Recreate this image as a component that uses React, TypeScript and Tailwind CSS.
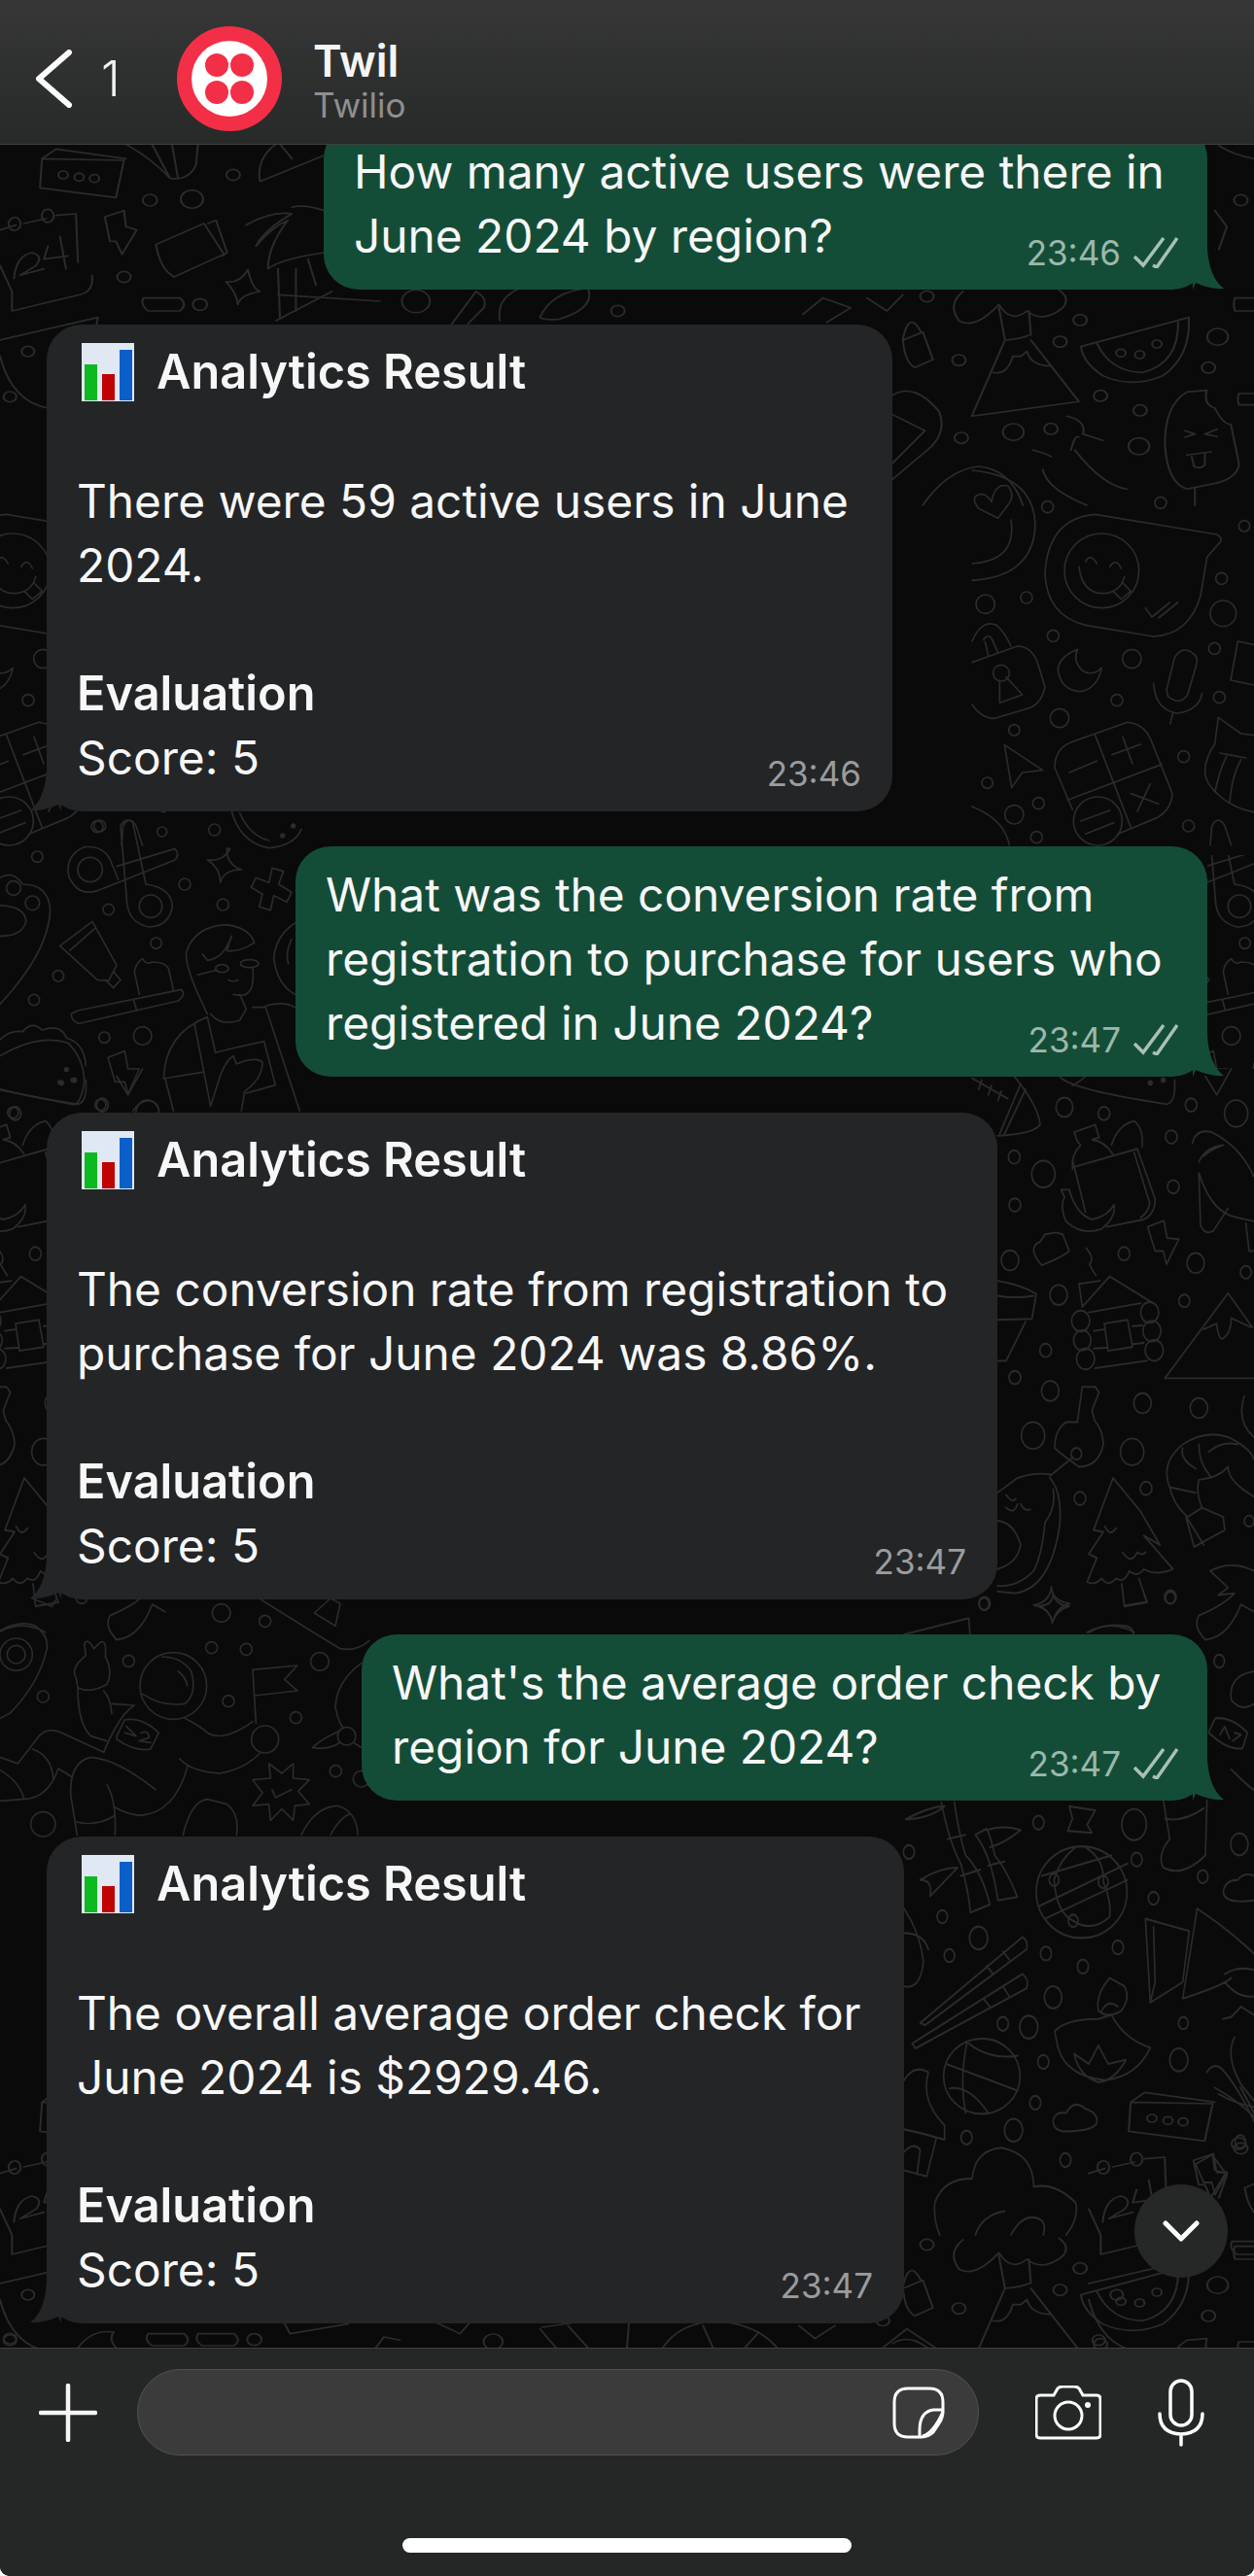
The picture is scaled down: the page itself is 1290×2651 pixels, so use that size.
type Group = {
  id: string;
  tf: string;
  rings: number[][];
  paths: string[];
  dots?: number[][];
};

// wallpaper doodles, traced per visible region of the chat background
const doodles: Group[] = [
  {
    id: "topLeft",
    tf: "scale(.4114 .3333)",
    rings: [[375, 618, 18], [480, 615, 28], [583, 540, 17], [310, 855, 17], [1040, 930, 35], [500, 940, 18], [1545, 960, 17], [158, 540, 12], [198, 547, 12], [236, 551, 12], [70, 1085, 16], [25, 1225, 16]],
    paths: [
      "M105 490L310 495L290 610L100 580ZM140 460L315 490M140 460L105 490",
      "M315 445Q380 490 425 550Q470 560 490 510L495 445M380 445L425 550M430 445L445 550",
      "M0 710L40 695M60 690L115 675M140 665L190 660L195 810M230 850Q235 900 200 910L30 960L30 900L0 820M45 675a15 20 0 1 0 1 1M128 650a15 20 0 1 0 1 1",
      "M35 860Q40 790 80 780Q110 790 90 820L50 850L110 830M120 760L110 800L170 790M150 730L165 830",
      "M262 670L310 650L315 700L342 710L305 785L290 745L275 745Z",
      "M390 755L510 690L560 785L435 855Q400 830 390 755ZM520 690L540 680L568 780L555 790",
      "M730 640Q760 630 810 650M615 695Q680 650 730 660Q660 710 640 760Q680 700 720 680Q670 760 670 830Q700 800 810 780M695 830L700 980M740 830L740 960M770 800L790 880M695 910L950 930M690 990L830 900",
      "M620 832Q630 890 650 900Q600 910 595 940Q590 900 565 870Q600 875 620 832Z",
      "M358 920H450Q470 940 450 960H370Q350 940 358 920Z",
      "M650 560L810 480M650 560Q640 490 690 445M700 445L730 490",
      "M1130 1000L1190 900Q1220 920 1210 950L1170 1000M1250 990Q1240 920 1300 890M1350 980Q1380 900 1470 890Q1490 950 1400 985Q1360 990 1350 980",
      "M0 1050L245 980L240 1010M0 1100Q30 1240 120 1260",
    ],
  },
  {
    id: "topRight",
    tf: "translate(645 100) scale(.4114 .3333)",
    rings: [[750, 615, 17], [1133, 688, 17], [1083, 755, 17], [830, 812, 17], [1477, 740, 26], [1454, 835, 17], [1184, 922, 17], [1283, 967, 17], [966, 1034, 26], [1060, 1024, 17], [836, 1052, 17], [1280, 1078, 26], [1535, 318, 17], [1235, 790, 12], [1282, 795, 12], [1325, 762, 12]],
    paths: [
      "M862 985L1130 940L1010 750M945 750L862 985M945 750Q990 745 1005 735M915 850Q950 860 965 800L985 800L1000 785Q1010 830 1060 830",
      "M930 640Q870 720 830 690Q800 640 840 600M930 640Q960 700 1000 660Q1040 700 1090 650Q1110 620 1080 595M930 650L945 750M1005 660L1010 735",
      "M1135 770L1405 680Q1410 800 1340 860Q1260 900 1190 860Q1140 820 1135 770ZM1175 760Q1210 850 1290 850Q1380 820 1378 695",
      "M1345 1070Q1345 950 1400 910L1450 905Q1440 950 1470 960Q1490 1010 1510 1010L1530 1130Q1530 1170 1480 1190L1400 1210Q1350 1190 1345 1070ZM1420 1205V1260M1395 1030L1420 1040L1395 1050M1475 1025L1445 1040L1475 1048M1400 1105L1460 1095M1412 1110L1418 1140Q1435 1150 1445 1135L1445 1100",
      "M1110 1090Q1120 1040 1130 1050M1100 985Q1150 1000 1140 1040L1190 1060M1120 1090Q1190 1200 1250 1210M1015 1090Q1050 1100 1060 1110M1040 1150Q1050 1210 1150 1260",
      "M690 750L740 725L765 810L720 835Q695 820 690 750ZM690 745Q700 690 715 695Q725 700 735 725",
      "M664 920Q720 880 780 970Q800 1030 760 1080L664 1180M664 980L745 1030L664 1130",
      "M740 1260Q800 1150 880 1140Q960 1150 990 1260",
      "M600 620L650 660L690 610M440 670L490 620L560 650L500 695M480 200L505 100",
      "M1480 150Q1520 180 1568 190M1470 350L1500 400L1480 470M1568 620H1520Q1515 640 1520 660H1568M1568 915H1530Q1525 930 1530 950H1568",
    ],
  },
  {
    id: "rightMiddle",
    tf: "translate(1000 480) scale(.3333)",
    rings: [[233, 125, 18], [582, 112, 18], [840, 184, 17], [770, 346, 18], [41, 425, 29], [168, 405, 18], [775, 454, 40], [250, 523, 18], [493, 594, 29], [748, 562, 18], [447, 722, 18], [763, 713, 18], [270, 777, 29], [130, 814, 17], [653, 896, 18], [47, 977, 17], [205, 1040, 18], [130, 1075, 29], [199, 1145, 18], [668, 1110, 18], [400, 322, 115], [90, 638, 25], [388, 1095, 75]],
    paths: [
      "M225 330Q235 160 380 148L755 210Q780 225 760 240L725 280L705 400Q670 520 560 525L350 490Q230 460 225 330Z",
      "M330 310Q340 395 410 392Q460 385 470 340M350 295Q365 265 385 300M425 310Q445 280 460 315M435 385L460 410L490 385L465 360M535 437L555 465L610 420M575 468L635 420",
      "M0 12Q190 30 195 180Q190 340 0 352M120 165Q140 290 0 300M80 160L20 130Q-10 90 30 85Q50 90 60 110Q70 50 110 60Q135 90 110 120Z",
      "M0 605L140 555Q180 555 200 600L225 680Q215 730 180 745L70 778Q30 780 0 735M0 540Q30 470 75 490Q100 510 120 555M35 535Q50 515 60 530L80 575M40 540L50 585M85 660L85 730L155 705L105 650",
      "M325 565Q265 590 265 630Q275 690 330 695Q385 690 400 622Q370 650 340 630Q310 600 325 565Z",
      "M600 690L625 590Q650 550 685 580Q700 590 690 620L665 705Q640 740 605 710ZM560 670Q565 750 630 762Q700 755 710 700M620 760L612 795",
      "M255 930Q255 870 310 850L480 790Q530 795 550 840L618 1010Q615 1060 570 1085L450 1135M255 930L310 1060M295 1030L585 920M380 830L490 1115M300 945L385 910M432 890L520 858M465 835L495 918M490 1010L575 1042M550 980L510 1065M335 1095L425 1062M350 1135L438 1100",
      "M100 860L218 938L155 945L122 992Z",
      "M750 850L760 775L830 825L870 830M750 855Q700 930 730 980Q780 1050 870 1068M765 885L845 900M785 895Q760 950 750 1005M830 905Q800 960 795 1040",
      "M870 550L820 540L798 660L870 675M735 1170L740 1110Q760 1075 780 1110L800 1170M0 1050Q100 1090 115 1170",
    ],
  },
  {
    id: "rightLower",
    tf: "translate(1000 1100) scale(.3333 .3827)",
    rings: [[285, 103, 26], [407, 120, 18], [676, 97, 18], [815, 120, 36], [130, 237, 18], [220, 283, 36], [615, 183, 18], [621, 317, 18], [132, 366, 18], [117, 515, 27], [469, 497, 18], [690, 522, 27], [845, 547, 17], [267, 608, 27], [655, 624, 17], [227, 757, 18], [132, 830, 18], [241, 866, 27], [526, 899, 27], [700, 912, 27], [188, 986, 36], [494, 1030, 36], [537, 1128, 18], [333, 1155, 18], [855, 1216, 15], [612, 1420, 18], [38, 1438, 18], [322, 1035, 16], [335, 678, 28], [340, 730, 27], [350, 780, 28], [548, 655, 28], [555, 705, 28], [562, 757, 28]],
    paths: [
      "M310 245L350 385M310 270Q305 230 335 205L325 195L315 170L380 150L392 185L370 190Q410 195 435 230M310 265L510 215L565 350Q565 390 530 405L415 425M500 225L548 360Q545 385 520 400M430 205Q450 150 500 140Q530 160 525 210",
      "M275 325L300 325Q320 390 370 405Q420 395 438 365Q445 400 400 430Q340 450 290 410Q270 370 285 345Z",
      "M542 425L592 408L602 455L638 458L600 525L590 490L565 490Z",
      "M680 200Q690 160 740 170Q830 210 870 290M700 280L705 420Q720 450 745 435L790 375M700 280Q740 390 820 400L870 410M700 250Q720 210 775 205Q730 220 715 235M845 415L855 490L870 490",
      "M190 490Q190 470 210 465L225 445L260 440L280 445L300 490Q280 505 215 528Q195 510 190 490Z",
      "M340 640L330 578L395 570M340 640L425 558L555 628M360 655L520 630M375 705L410 700M495 692L525 690M375 752L415 750M495 740L530 737M380 805L540 785M408 685L480 675L495 748L420 758ZM352 482Q380 510 362 525Q370 540 382 555",
      "M595 832L790 603L865 695M595 832H870M715 700L755 685Q760 730 775 725Q800 710 800 670L860 695",
      "M340 855L380 855L392 870L378 900L370 920L378 945Q405 975 405 1010Q390 1070 330 1070Q280 1040 255 1020Q255 970 290 950L325 950ZM310 1045L240 1095",
      "M240 1090Q190 1085 140 1100L78 1140M240 1100Q280 1140 270 1230Q240 1400 130 1410L78 1405M250 1130Q260 1180 225 1220Q215 1310 190 1350Q140 1395 78 1390M78 1215Q130 1220 150 1280Q140 1330 78 1345M105 1145Q125 1170 135 1155M105 1180Q130 1200 140 1170M150 1170Q160 1190 180 1185",
      "M435 1100L375 1240L405 1245L360 1305L385 1315L355 1380Q380 1390 400 1370Q420 1395 445 1370Q470 1385 485 1350Q510 1370 530 1345Q570 1365 620 1345L530 1255L580 1280L520 1190ZM462 1385L470 1445L540 1435L515 1370M410 1230Q425 1260 445 1235M465 1300Q490 1335 510 1300Q525 1310 535 1300",
      "M610 1125Q580 1060 650 1010Q720 970 790 990Q860 1020 870 1050M610 1125L690 1140M650 1020Q640 1050 690 1075M700 1010Q700 1060 735 1095M730 1030Q770 1000 820 1010M610 1125Q620 1170 665 1205L710 1180Q690 1140 700 1105Q760 1100 790 1070Q790 1110 870 1150M660 1205L685 1285L780 1240L775 1205L710 1180M665 1210L715 1280",
      "M735 1350Q800 1320 870 1350M735 1350L790 1395L760 1415L810 1410Q780 1440 700 1470Q680 1500 720 1535Q790 1530 830 1440L870 1460",
      "M245 1392Q245 1430 302 1438Q260 1445 248 1490Q240 1450 190 1442Q240 1435 245 1392Z",
      "M78 570Q150 580 198 605L185 672L78 675M78 610Q130 618 190 610M165 680L105 785L78 785",
      "M0 25L110 80M130 20Q205 100 210 150Q190 175 78 180M165 55L100 175M150 40L85 175M30 30L20 55M60 45L50 70M90 60L80 85",
      "M270 20Q300 55 600 95Q630 90 625 30M310 45Q340 30 350 20M720 20L755 70L800 0M840 880Q815 950 870 990M355 1515Q430 1480 500 1515",
    ],
    dots: [[550, 38, 8], [590, 30, 8]],
  },
  {
    id: "rightBottom",
    tf: "translate(930 1640) scale(.3333 .4209)",
    rings: [[247, 25, 15], [822, 10, 15], [973, 165, 16], [415, 560, 17], [710, 565, 38], [15, 632, 17], [718, 650, 17], [922, 692, 16], [770, 745, 16], [1035, 613, 27], [118, 790, 16], [230, 842, 28], [140, 885, 16], [438, 880, 17], [660, 865, 17], [552, 912, 17], [460, 987, 27], [305, 1052, 17], [385, 1060, 28], [862, 1050, 15], [430, 1145, 17], [848, 1140, 28], [405, 1245, 17], [338, 1312, 28], [193, 1330, 17], [1038, 1340, 16], [498, 1385, 17], [463, 700, 15], [615, 705, 15], [522, 800, 15]],
    paths: [
      "M115 510Q140 610 175 660Q200 730 205 780L265 760Q240 680 190 640Q170 590 155 510M135 600L190 590M175 690L235 675M220 590Q270 640 290 750L350 742Q320 680 280 640Q270 600 255 575L220 590M260 665L310 655",
      "M5 552Q80 520 125 520Q80 550 5 552M50 700Q110 670 165 670Q130 700 80 740Q90 700 50 700M255 578Q310 565 360 578Q310 610 265 620",
      "M408 730a140 112 0 1 0 280 0a140 112 0 1 0 -280 0M415 765L690 660M435 795L690 700M425 690L640 640M463 700Q470 780 522 800Q580 830 635 790M615 705Q640 750 635 790M530 620Q480 650 463 700M560 620Q620 650 615 705",
      "M50 1050L365 840Q385 850 378 870L65 1055ZM25 1100L365 930Q388 945 378 965L35 1112ZM255 910L275 930M305 875L325 895M245 990L265 1010M305 960L325 985",
      "M745 795L880 825L860 950L760 1000L745 795M770 815L775 950L760 1000M905 770L860 990Q980 960 1010 940M905 770Q1000 820 1080 880M990 930Q1030 910 1080 920M990 950Q1030 990 1080 985",
      "M465 1070Q500 1040 600 1040L640 1030Q680 1090 760 1110Q720 1180 620 1190Q500 1180 475 1110ZM635 940Q590 980 600 1020Q630 1040 670 1020Q700 990 680 960L635 940M610 1020Q630 990 660 1010M525 1125L570 1150L600 1105L630 1150L685 1140Q650 1190 600 1195Q540 1180 525 1125Z",
      "M122 1180a118 92 0 1 0 236 0a118 92 0 1 0 -236 0M130 1150L350 1215M195 1095Q170 1190 190 1270M140 1210Q200 1200 260 1270M200 1100Q260 1140 350 1130",
      "M460 1290Q465 1265 500 1270Q525 1235 560 1260Q600 1270 595 1295Q580 1315 490 1315Q460 1310 460 1290Z",
      "M95 1490Q120 1430 210 1430Q220 1360 300 1355Q400 1370 400 1450Q470 1440 530 1490Q540 1530 500 1568M220 1568Q240 1520 310 1510M330 1568Q370 1510 420 1530Q440 1540 430 1568M95 1490Q90 1530 110 1568",
      "M0 1190Q30 1150 75 1170Q50 1240 125 1300L125 1335L100 1330L70 1425L0 1410M0 1310Q60 1320 100 1330M0 1365Q30 1340 50 1360L40 1420",
      "M800 505L820 600Q780 640 800 670Q860 695 930 640L935 505M805 550Q860 560 925 525",
      "M940 340L960 305Q1010 300 1060 340L1045 378Q1000 385 940 340ZM975 345L990 325L1005 355M1020 340L1040 345L1015 360",
      "M1080 190Q1000 200 1010 260Q1040 290 1080 270M1010 430Q1060 470 1080 480",
      "M985 1040L1010 1035L1040 1010L1080 1030M1020 1085Q990 1130 1040 1200L1080 1240M935 1170Q960 1140 990 1170Q1040 1220 1080 1290",
      "M415 30Q460 30 460 0Q470 30 510 30Q470 40 458 70Q450 40 415 30ZM510 520L590 530L565 565L580 585L505 580L520 550Z",
      "M985 730Q990 700 1030 700Q1050 680 1080 690M985 730Q990 760 1080 750M0 770Q50 830 60 900Q50 970 0 960M0 830Q60 830 75 870",
      "M900 1395L955 1370L965 1415L998 1415L960 1470L950 1440L925 1440Z",
      "M0 100L200 60L205 120M680 30L750 20L740 0M570 95Q620 70 690 80Q720 90 700 115",
    ],
  },
  {
    id: "leftMiddle",
    tf: "translate(0 830) scale(.3333)",
    rings: [[115, 155, 17], [300, 62, 18], [500, 78, 15], [662, 72, 18], [570, 240, 18], [688, 303, 18], [335, 318, 17], [482, 422, 17], [180, 523, 17], [105, 597, 17], [322, 713, 17], [440, 708, 28], [310, 921, 17], [40, 945, 17], [278, 195, 38], [465, 308, 35], [42, 252, 22], [100, 298, 22]],
    paths: [
      "M360 185L540 130Q556 150 540 165L300 260Q240 280 212 215Q200 150 260 125Q320 120 340 165L365 225M372 60Q390 30 410 50L450 240Q530 250 532 310Q520 370 460 372Q400 360 392 300L388 250Z",
      "M0 220Q40 195 70 240Q150 240 155 320Q150 450 0 610M0 305Q80 310 80 355Q70 400 0 400",
      "M185 430L285 355L360 490L335 538L300 535ZM215 445L295 375M325 535L350 560L372 535L350 510",
      "M220 640Q220 665 245 670L550 600Q575 580 560 565L240 630ZM412 595L422 630M430 580L415 510Q420 480 440 470Q450 490 470 480Q510 480 520 500L535 565",
      "M640 640Q570 500 575 450Q600 370 700 365Q770 375 785 420Q740 450 700 445L715 400Q690 470 640 475L625 455M610 520L670 505M665 500a20 12 0 1 0 40 0a20 12 0 1 0 -40 0M742 485a28 12 0 1 0 56 0a28 12 0 1 0 -56 0M780 500Q790 600 720 580M650 640Q680 680 740 660L760 625M740 580L760 625M705 535Q720 545 735 535",
      "M640 650Q510 700 505 840L625 820M510 840L535 940M600 670L650 925L680 830Q700 780 720 770L730 795Q790 770 810 790Q810 840 755 880L745 940M725 745L815 725L850 860L760 885M640 650L665 760L725 745M780 620L820 620L925 940M820 615Q880 600 910 620",
      "M0 770Q120 700 210 730Q260 780 260 850Q250 920 225 920L0 875M0 720Q30 690 70 695Q100 660 130 690Q190 670 205 715Q260 730 265 800",
      "M333 775L385 755L395 810L430 810L395 888L385 850L355 850Z",
      "M700 130Q700 180 745 195Q690 195 680 235Q680 190 640 165Q690 170 710 130Z",
      "M840 190L875 200L860 240L900 265L885 295L845 275L835 320L800 310L810 270L775 250L790 220L830 235Z",
      "M910 360Q850 400 845 470Q855 550 910 580M900 410Q880 450 890 485",
      "M715 15Q740 110 830 128Q910 120 930 70M740 20Q770 90 830 105",
      "M410 940Q440 900 470 910Q490 920 490 940",
    ],
    dots: [[205, 812, 8], [225, 845, 8], [185, 852, 8], [872, 90, 8], [905, 60, 8]],
  },
  {
    id: "leftLower",
    tf: "translate(0 1640) scale(.3333)",
    rings: [[535, 285, 103], [818, 450, 42], [50, 188, 50], [50, 188, 28], [1070, 440, 28], [683, 60, 28], [818, 85, 18], [653, 167, 18], [760, 172, 18], [987, 210, 28], [133, 318, 18], [397, 208, 18], [705, 332, 18], [913, 383, 18], [1036, 548, 18], [133, 712, 38], [1115, 572, 25]],
    paths: [
      "M440 310Q500 350 570 340Q610 310 590 240Q560 195 500 195M550 240Q575 260 578 285",
      "M240 290Q240 400 280 440L330 455M345 370Q340 320 320 300M235 260Q222 240 240 215Q260 195 265 190L260 155Q270 135 290 170L310 150Q330 140 325 195Q350 240 330 280Q280 310 240 290Z",
      "M345 340L415 345Q370 370 320 490L190 430Q150 410 120 440L55 525L0 505M360 440L385 390Q440 380 490 430L465 480Q420 490 360 450ZM390 410L420 440L385 430M435 430Q460 420 460 445L430 455L465 460",
      "M570 385Q620 410 640 430Q690 460 780 395M790 400L780 235L918 222L878 265L918 300L785 315M555 510Q590 550 680 555Q760 540 805 490",
      "M480 605Q360 510 280 505Q215 520 218 620L238 745M580 530Q540 680 430 685Q390 680 355 660M330 590Q360 640 355 745M235 705Q300 720 355 685",
      "M0 545Q60 580 75 635Q150 630 180 540L220 565M100 480Q160 500 165 575M0 640L70 635",
      "M0 115Q60 80 110 100Q150 130 145 170Q120 280 30 370L0 385",
      "M1045 425Q990 450 965 475Q1010 485 1050 460M1090 460L1115 475M1115 215Q1040 270 1035 350Q1045 400 1060 415",
      "M830 525L870 555L905 525L905 570L955 575L920 610L955 650L910 655L905 700L870 665L835 700L830 650L780 655L810 615L780 575L835 570ZM840 605L850 630L900 605",
      "M800 15Q950 110 1050 170Q1100 180 1140 145M970 60L1035 100L1050 30L1020 15Z",
      "M565 745Q590 640 640 635L700 650Q740 680 730 745M930 745Q970 660 1040 655Q1100 670 1105 745M1020 745Q1050 690 1080 680",
      "M100 15L160 40L175 15",
    ],
  },
  {
    id: "bottomBand",
    tf: "translate(0 2220) scale(.4114 .3333)",
    rings: [[25, 560, 16], [636, 563, 18], [1233, 570, 24]],
    paths: [
      "M370 545H460Q480 565 460 582H380Q360 565 370 545ZM495 545H585Q605 565 585 582H505Q485 565 495 545Z",
      "M195 588Q230 530 285 540Q270 560 290 588M710 510L725 545L870 515M1090 510L1150 545L1175 510M940 588L960 555L1000 565M1350 530L1390 588M1420 520L1470 588M1355 525L1440 510",
    ],
  },
  {
    id: "bottomBandRight",
    tf: "translate(645 2220) scale(.4114 .3333)",
    rings: [[640, 505, 16]],
    paths: [
      "M90 588Q130 510 230 505Q330 520 375 588M190 520L215 588M330 540L295 588M0 588L5 510M430 520L470 560L520 520M640 588L700 530L770 588",
    ],
  },
];

function DoodleGroup({ group, tf }: { group: Group; tf?: string }) {
  return (
    <g transform={tf ? `${tf} ${group.tf}` : group.tf}>
      {group.paths.map((d, i) => (
        <path key={i} d={d} />
      ))}
      {group.rings.map(([cx, cy, r], i) => (
        <circle key={i} cx={cx} cy={cy} r={r} />
      ))}
      {group.dots?.map(([cx, cy, r], i) => (
        <circle key={i} cx={cx} cy={cy} r={r} fill="#2b2b2b" stroke="none" />
      ))}
    </g>
  );
}

function Wallpaper() {
  const byId = (id: string) => doodles.find((d) => d.id === id)!;
  return (
    <svg
      className="absolute left-0 top-0 h-[2651px] w-[1290px]"
      viewBox="0 0 1290 2651"
      fill="none"
      stroke="#2b2b2b"
      strokeWidth={5}
      strokeLinecap="round"
      strokeLinejoin="round"
    >
      <defs>
        <clipPath id="rightStrip">
          <rect x="1242" y="880" width="48" height="220" />
        </clipPath>
      </defs>
      {doodles.map((g) => (
        <DoodleGroup key={g.id} group={g} />
      ))}
      {/* the wallpaper tiles every 1120 x 2000 */}
      <DoodleGroup group={byId("topLeft")} tf="translate(0 2000)" />
      <DoodleGroup group={byId("topLeft")} tf="translate(1120 2000)" />
      <DoodleGroup group={byId("topRight")} tf="translate(0 2005)" />
      <DoodleGroup group={byId("rightMiddle")} tf="translate(-1120 0)" />
      <DoodleGroup group={byId("rightLower")} tf="translate(-1120 0)" />
      <g clipPath="url(#rightStrip)">
        <DoodleGroup group={byId("leftMiddle")} tf="translate(1120 0)" />
      </g>
    </svg>
  );
}

function BarChartEmoji() {
  return (
    <svg viewBox="0 0 54 60" className="h-[60px] w-[54px] shrink-0">
      <rect width="54" height="60" fill="#dfe8f3" />
      <rect x="3" y="22" width="13" height="37" fill="#0cba1f" />
      <rect x="21" y="32" width="13" height="27" fill="#bf0303" />
      <rect x="39" y="7" width="13" height="52" fill="#0b5fc9" />
    </svg>
  );
}

function TwilioLogo() {
  return (
    <svg viewBox="0 0 108 108" className="h-[108px] w-[108px] shrink-0">
      <circle cx="54" cy="54" r="54" fill="#f22f46" />
      <circle cx="54" cy="54" r="39" fill="#fff" />
      <circle cx="41" cy="40" r="12" fill="#f22f46" />
      <circle cx="67" cy="40" r="12" fill="#f22f46" />
      <circle cx="41" cy="68" r="12" fill="#f22f46" />
      <circle cx="67" cy="68" r="12" fill="#f22f46" />
    </svg>
  );
}

function DoubleCheck() {
  return (
    <svg viewBox="0 0 46 32" className="h-[32px] w-[46px]" fill="none" stroke="#a9c0b6" strokeWidth="3.5">
      <path d="M1 20L10 29L31 1" />
      <path d="M20 29L24 31L45 1" />
    </svg>
  );
}

function Bubble({ out, width, extra, time, children }: { out?: boolean; width: string; extra?: string; time: string; children: React.ReactNode }) {
  return (
    <div className={`relative ${width} ${extra ?? ""} ${out ? "self-end bg-[#144d37]" : "self-start bg-[#232527]"} rounded-[36px] pb-[22px] pl-[31px] pt-[17px] text-[47.8px] leading-[66px] text-[#f7f7f7]`}>
      {children}
      {out ? (
        <>
          <svg viewBox="0 0 32 42" className="absolute -right-[17px] bottom-0 h-[42px] w-[32px]">
            <path d="M15 0Q17 30 32 41Q18 42 3 35L0 42H0V0Z" fill="#144d37" />
          </svg>
          <div className="absolute bottom-[18px] right-[30px] flex items-center gap-[13px]">
            <span className="text-[35px] leading-[40px] text-[#9cb8ab]">{time}</span>
            <DoubleCheck />
          </div>
        </>
      ) : (
        <>
          <svg viewBox="0 0 32 42" className="absolute -left-[17px] bottom-0 h-[42px] w-[32px]">
            <path d="M17 0Q15 30 0 41Q14 42 29 35L32 42V0Z" fill="#232527" />
          </svg>
          <span className="absolute bottom-[19px] right-[32px] text-[35px] leading-[40px] text-[#9b9c9d]">{time}</span>
        </>
      )}
    </div>
  );
}

function ResultBubble({ width, extra, time, lines }: { width: string; extra?: string; time: string; lines: string[] }) {
  return (
    <Bubble width={width} extra={extra} time={time}>
      <div className="-mt-[1px] flex h-[66px] items-center gap-[23px] pl-[5px] text-[48.7px] font-semibold">
        <BarChartEmoji />
        <span>Analytics Result</span>
      </div>
      <div className="mt-[67px]">
        {lines.map((l) => (
          <div key={l}>{l}</div>
        ))}
      </div>
      <div className="mt-[66px] text-[48.7px] font-semibold">Evaluation</div>
      <div>Score: 5</div>
    </Bubble>
  );
}

export default function App() {
  return (
    <div className="relative flex h-[2651px] w-[1290px] flex-col overflow-hidden bg-white font-[Inter,sans-serif]">
      <div className="relative flex h-full flex-col overflow-hidden rounded-b-[10px] bg-[#0a0a0a]">
        <Wallpaper />

        {/* HEADER */}
        <header className="relative z-10 flex h-[149px] shrink-0 items-center border-b border-[#3d413f] bg-gradient-to-b from-[#363736] to-[#272a29] pl-[37px] pt-[13px]">
          <svg viewBox="0 0 38 60" className="h-[60px] w-[38px]" fill="none" stroke="#fff" strokeWidth="6" strokeLinecap="round" strokeLinejoin="round">
            <path d="M34 3L3 30L34 57" />
          </svg>
          <span className="ml-[29px] w-[78px] text-[50px] font-light leading-none text-[#f2f2f2]">1</span>
          <TwilioLogo />
          <div className="ml-[32px] flex flex-col">
            <span className="text-[45px] font-semibold leading-[54px] text-[#f5f5f5]">Twil</span>
            <span className="text-[35px] leading-[36px] text-[#8f8f8f]">Twilio</span>
          </div>
        </header>

        {/* MESSAGES */}
        <main className="relative flex min-h-0 flex-1 flex-col gap-[36px] overflow-hidden px-[48px]">
          <Bubble out width="w-[909px]" extra="-mt-[22px]" time="23:46">
            <div>How many active users were there in</div>
            <div>June 2024 by region?</div>
          </Bubble>
          <ResultBubble width="w-[870px]" time="23:46" lines={["There were 59 active users in June", "2024."]} />
          <Bubble out width="w-[938px]" time="23:47">
            <div>What was the conversion rate from</div>
            <div>registration to purchase for users who</div>
            <div>registered in June 2024?</div>
          </Bubble>
          <ResultBubble width="w-[978px]" extra="mt-px" time="23:47" lines={["The conversion rate from registration to", "purchase for June 2024 was 8.86%."]} />
          <Bubble out width="w-[870px]" time="23:47">
            <div>What's the average order check by</div>
            <div>region for June 2024?</div>
          </Bubble>
          <ResultBubble width="w-[882px]" extra="mt-px" time="23:47" lines={["The overall average order check for", "June 2024 is $2929.46."]} />

          <button className="absolute bottom-[72px] right-[27px] flex h-[96px] w-[96px] items-center justify-center rounded-full bg-[#262828]">
            <svg viewBox="0 0 38 22" className="h-[22px] w-[38px]" fill="none" stroke="#fff" strokeWidth="5" strokeLinecap="round" strokeLinejoin="round">
              <path d="M3 3L19 19L35 3" />
            </svg>
          </button>
        </main>

        {/* INPUT BAR */}
        <footer className="relative z-10 h-[235px] shrink-0 border-t border-[#3d3f3f] bg-[#252727]">
          <div className="flex h-[110px] items-center pl-[40px] pt-[21px]">
            <svg viewBox="0 0 60 60" className="h-[60px] w-[60px]" fill="none" stroke="#f5f5f5" strokeWidth="4.5" strokeLinecap="round">
              <path d="M30 2V58M2 30H58" />
            </svg>
            <div className="ml-[41px] flex h-[89px] w-[866px] items-center justify-end rounded-[44px] border border-[#4f5050] bg-[#3b3b3b] pr-[34px]">
              <svg viewBox="0 0 54 54" className="h-[54px] w-[54px]" fill="none" stroke="#fff" strokeWidth="3">
                <path d="M16 2H38Q52 2 52 16V26Q52 32 48 38L42 47Q37 52 30 52H16Q2 52 2 38V16Q2 2 16 2Z" />
                <path d="M52 24H42Q28 26 28 45V52M31 51Q42 48 52 26" />
              </svg>
            </div>
            <svg viewBox="0 0 68 56" className="ml-[58px] h-[56px] w-[68px]" fill="none" stroke="#fff" strokeWidth="3">
              <path d="M5 10H19L23 3Q25 1 28 1H40Q43 1 45 3L49 10H63Q67 10 67 14V50Q67 54 63 54H5Q1 54 1 50V14Q1 10 5 10Z" />
              <circle cx="34" cy="31" r="14" />
              <circle cx="54" cy="20" r="3" fill="#fff" stroke="none" />
            </svg>
            <svg viewBox="0 0 48 70" className="ml-[58px] h-[70px] w-[48px]" fill="none" stroke="#fff" strokeWidth="3.5" strokeLinecap="round">
              <rect x="13" y="2" width="22" height="46" rx="11" />
              <path d="M2 36Q2 56 24 57Q46 56 46 36M24 57V68" />
            </svg>
          </div>
          <div className="absolute bottom-[24px] left-[414px] h-[15px] w-[462px] rounded-full bg-white" />
        </footer>
      </div>
    </div>
  );
}
